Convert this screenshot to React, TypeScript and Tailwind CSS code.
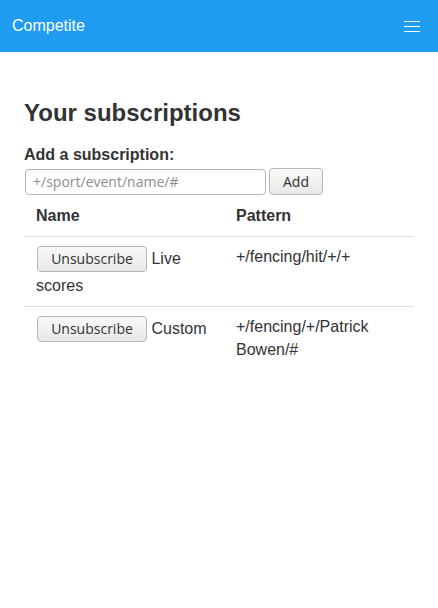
import React from "react"

interface Subscription {
    name: string,
    pattern: string
}

const subscriptions: Subscription[] = [
    { name: "Live scores", pattern: "+/fencing/hit/+/+" },
    { name: "Custom", pattern: "+/fencing/+/Patrick Bowen/#" },
]

const btn = "h-[26px] rounded-[4px] border border-[#b6b6b3] bg-gradient-to-b from-[#f9f9f8] to-[#e9e8e6] text-[14px] leading-none text-[#2e3436] font-['Open_Sans',sans-serif] align-baseline"

const App: React.FC = () => {
  return (
    <div className="min-h-[608px] bg-white text-[#333] font-['Liberation_Sans',Arial,sans-serif] text-[16px] leading-[1.42857]">

        {/* navbar */}
        <nav className="h-[52px] bg-[#1f9cef] flex items-center justify-between pl-3 pr-[18px]">
            <span className="text-white text-[16px] leading-6">Competite</span>
            <svg width="16" height="11" viewBox="0 0 16 11" className="block">
                <path d="M0 0.5H16M0 5.5H16M0 10.5H16" stroke="white" strokeWidth="1" />
            </svg>
        </nav>

        <main className="px-6 pt-12">
            <h2 className="text-[24px] leading-[1.1] font-bold">Your subscriptions</h2>

            <div className="mt-[18px]">
                <label className="block font-bold">Add a subscription:</label>
                <div className="mt-px flex items-center gap-[3px]">
                    <input
                        className="ml-px w-[241px] h-[26px] rounded-[4px] border border-[#b6b6b3] bg-white px-[7px] text-[14px] font-['Open_Sans',sans-serif] text-[#333] placeholder:text-[#8b8e8f] outline-none"
                        placeholder="+/sport/event/name/#"
                    />
                    <button className={`${btn} h-[27px] w-[54px]`}>Add</button>
                </div>
            </div>

            <table className="w-full table-fixed border-collapse">
                <thead>
                    <tr>
                        <th className="w-[200px] text-left px-3 pt-[10px] pb-2 font-bold">Name</th>
                        <th className="text-left px-3 pt-[10px] pb-2 font-bold">Pattern</th>
                    </tr>
                </thead>
                <tbody>
                    {
                        subscriptions.map((sub, index) => (
                            <tr key={index} className="border-t border-[#ddd]">
                                <td className="align-top px-3 pt-[9px] pb-[8px]">
                                    <button className={`${btn} ml-px mb-[3px] w-[110px]`}>Unsubscribe</button>{" "}{sub.name}
                                </td>
                                <td className="align-top px-3 pt-[9px] pb-[8px]">
                                    {sub.pattern}
                                </td>
                            </tr>
                        ))
                    }
                </tbody>
            </table>
        </main>

    </div>
  )
}

export default App
